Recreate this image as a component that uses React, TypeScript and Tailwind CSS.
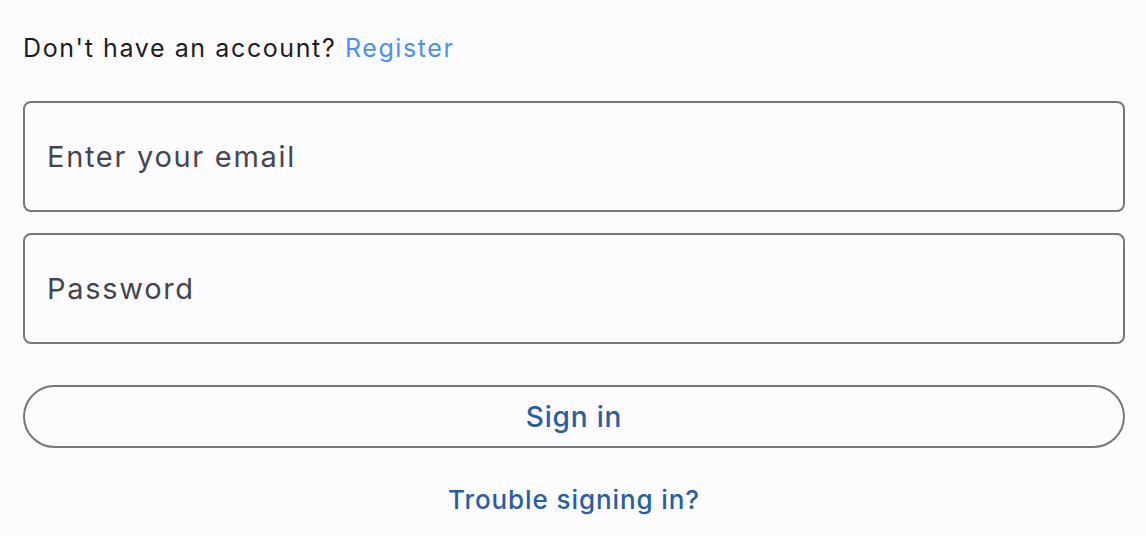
export default function App() {
  return (
    <div
      className="min-h-screen bg-[#fcfbfe] pl-[23px] pr-[21px] pt-[30px]"
      style={{ fontFamily: "Inter, 'Noto Sans', sans-serif" }}
    >
      <p className="text-[25px] leading-[36px] tracking-[1.6px] text-[#1d1d1f]">
        Don't have an account?{" "}
        <a href="#" className="text-[#4a92ea]">
          Register
        </a>
      </p>

      <form className="mt-[35px] flex flex-col">
        <input
          type="email"
          placeholder="Enter your email"
          className="h-[111px] w-full rounded-[8px] border-2 border-[#76777d] bg-transparent px-[22px] text-[29px] tracking-[1.7px] text-[#1d1d1f] outline-none placeholder:text-[#45454d]"
        />
        <input
          type="password"
          placeholder="Password"
          className="mt-[21px] h-[111px] w-full rounded-[8px] border-2 border-[#76777d] bg-transparent px-[22px] text-[29px] tracking-[1.7px] text-[#1d1d1f] outline-none placeholder:text-[#45454d]"
        />
        <button
          type="button"
          className="mt-[41px] h-[63px] w-full rounded-full border-2 border-[#76777d] bg-transparent text-[28px] font-medium tracking-[0.8px] text-[#2a5ea3]"
        >
          Sign in
        </button>
      </form>

      <div className="mt-[32px] text-center">
        <a href="#" className="text-[26px] font-medium tracking-[0.9px] text-[#2a5ea3]">
          Trouble signing in?
        </a>
      </div>
    </div>
  );
}
